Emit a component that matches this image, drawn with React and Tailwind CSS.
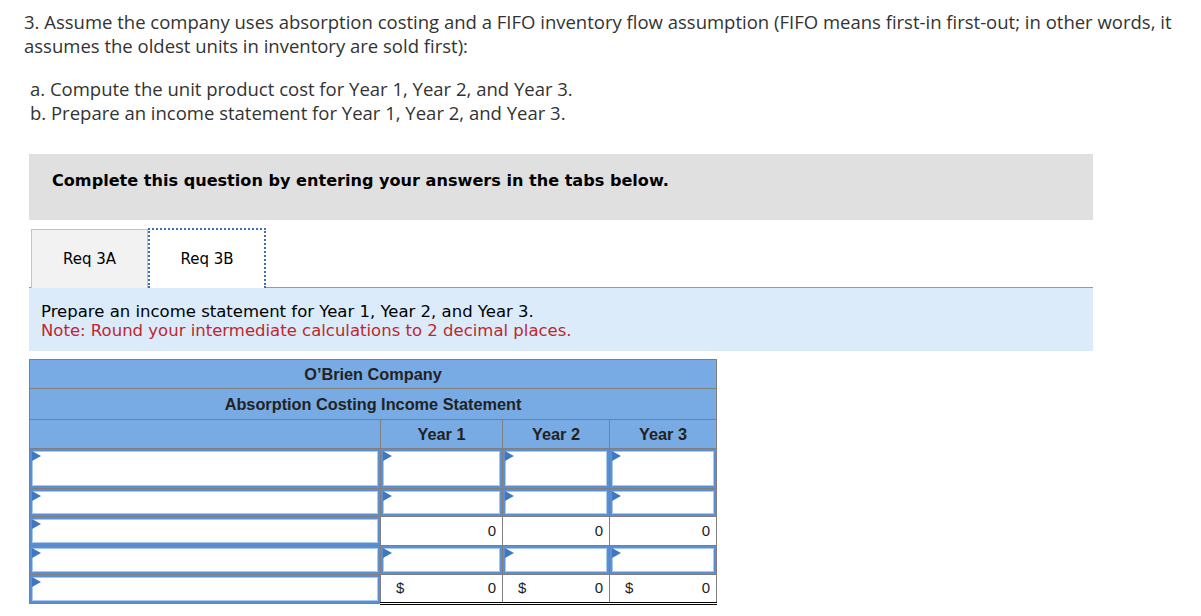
import React from "react";

const Tri = () => (
  <svg className="absolute left-0 top-0" width="9" height="10" viewBox="0 0 9 10">
    <polygon points="0,0 9,5 0,10" fill="#3f77c2" />
  </svg>
);

const InputBox = ({ h }) => (
  <div
    className="relative w-full bg-white border-2 border-[#5b8fd2] shadow-[inset_0_0_0_1px_#a9c8ee]"
    style={{ height: h }}
  >
    <Tri />
  </div>
);

const rows = [
  { h: 40, kind: "input" },
  { h: 28, kind: "input" },
  { h: 29, kind: "zero" },
  { h: 29, kind: "input" },
  { h: 29, kind: "dollar" },
];

export default function App() {
  return (
    <div className="bg-white w-[1201px] h-[616px] overflow-hidden text-[#333]">
      <div className="pl-[24px] pt-[10px]" style={{ fontFamily: '"Open Sans", Arial, sans-serif' }}>
        <p className="text-[18.5px] leading-[24px]">
          3. Assume the company uses absorption costing and a FIFO inventory flow assumption (FIFO means first-in first-out; in other words, it assumes the oldest units in inventory are sold first):
        </p>
        <div className="mt-[19px] pl-[6px] text-[18.5px] leading-[24px]">
          <p>a. Compute the unit product cost for Year 1, Year 2, and Year 3.</p>
          <p>b. Prepare an income statement for Year 1, Year 2, and Year 3.</p>
        </div>
      </div>

      <div className="ml-[29px] w-[1064px]">
        <div
          className="mt-[29px] h-[66px] bg-[#e0e0e0] pl-[23px] pt-[17px] text-[16.1px] leading-[19px] font-bold text-black"
          style={{ fontFamily: '"DejaVu Sans", Verdana, sans-serif' }}
        >
          Complete this question by entering your answers in the tabs below.
        </div>

        <div
          className="mt-[9px] flex items-end h-[59px] border-b border-[#9a9a9a] text-[15px] text-black"
          style={{ fontFamily: '"DejaVu Sans", Verdana, sans-serif' }}
        >
          <div className="ml-[2px] w-[117px] h-[59px] -mb-px bg-[#f2f2f2] border border-b-0 border-[#c4c4c4] flex items-center justify-center">
            Req 3A
          </div>
          <div className="w-[118px] h-[60px] -mb-px bg-white border-2 border-dotted border-[#3c6fb5] border-b-0 flex items-center justify-center">
            Req 3B
          </div>
        </div>

        <div
          className="bg-[#dbebf9] pl-[12px] pt-[14px] pb-[11px] text-[16.5px] leading-[19px] text-black"
          style={{ fontFamily: '"DejaVu Sans", Verdana, sans-serif' }}
        >
          <p>Prepare an income statement for Year 1, Year 2, and Year 3.</p>
          <p className="text-[#c0262d]">Note: Round your intermediate calculations to 2 decimal places.</p>
        </div>

        <table
          className="mt-[8px] table-fixed border-collapse w-[687px] text-[#222]"
          style={{ fontFamily: '"Liberation Sans", Arial, sans-serif' }}
        >
          <colgroup>
            <col style={{ width: 351 }} />
            <col style={{ width: 122 }} />
            <col style={{ width: 107 }} />
            <col style={{ width: 107 }} />
          </colgroup>
          <thead>
            <tr className="h-[29px] bg-[#78abe3]">
              <th colSpan={4} className="border border-[#7f7f7f] text-[16.3px] font-bold text-center p-0">
                O’Brien Company
              </th>
            </tr>
            <tr className="h-[31px] bg-[#78abe3]">
              <th colSpan={4} className="border border-[#7f7f7f] text-[16.3px] font-bold text-center p-0">
                Absorption Costing Income Statement
              </th>
            </tr>
            <tr className="h-[29px] bg-[#78abe3]">
              <th className="border border-[#7f7f7f] p-0"></th>
              <th className="border border-[#7f7f7f] text-[16.3px] font-bold text-center p-0">Year 1</th>
              <th className="border border-[#7f7f7f] text-[16.3px] font-bold text-center p-0">Year 2</th>
              <th className="border border-[#7f7f7f] text-[16.3px] font-bold text-center p-0">Year 3</th>
            </tr>
          </thead>
          <tbody>
            {rows.map((r, i) => (
              <tr key={i} style={{ height: r.h }}>
                <td className="border border-[#7f7f7f] p-0 align-top">
                  <InputBox h={r.h - 1} />
                </td>
                {[0, 1, 2].map((c) => {
                  if (r.kind === "input") {
                    return (
                      <td key={c} className="border border-[#7f7f7f] p-0 align-top">
                        <InputBox h={r.h - 1} />
                      </td>
                    );
                  }
                  if (r.kind === "zero") {
                    return (
                      <td
                        key={c}
                        className="border border-[#7f7f7f] border-t-black p-0 pr-[6px] text-right text-[15px] bg-white"
                      >
                        0
                      </td>
                    );
                  }
                  return (
                    <td
                      key={c}
                      className="border border-[#7f7f7f] border-t-black border-b-[3px] border-b-black border-double p-0 text-[15px] bg-white"
                      style={{ borderLeftStyle: "solid", borderRightStyle: "solid", borderTopStyle: "solid" }}
                    >
                      <div className="flex justify-between pl-[15px] pr-[6px]">
                        <span>$</span>
                        <span>0</span>
                      </div>
                    </td>
                  );
                })}
              </tr>
            ))}
          </tbody>
        </table>
      </div>
    </div>
  );
}
